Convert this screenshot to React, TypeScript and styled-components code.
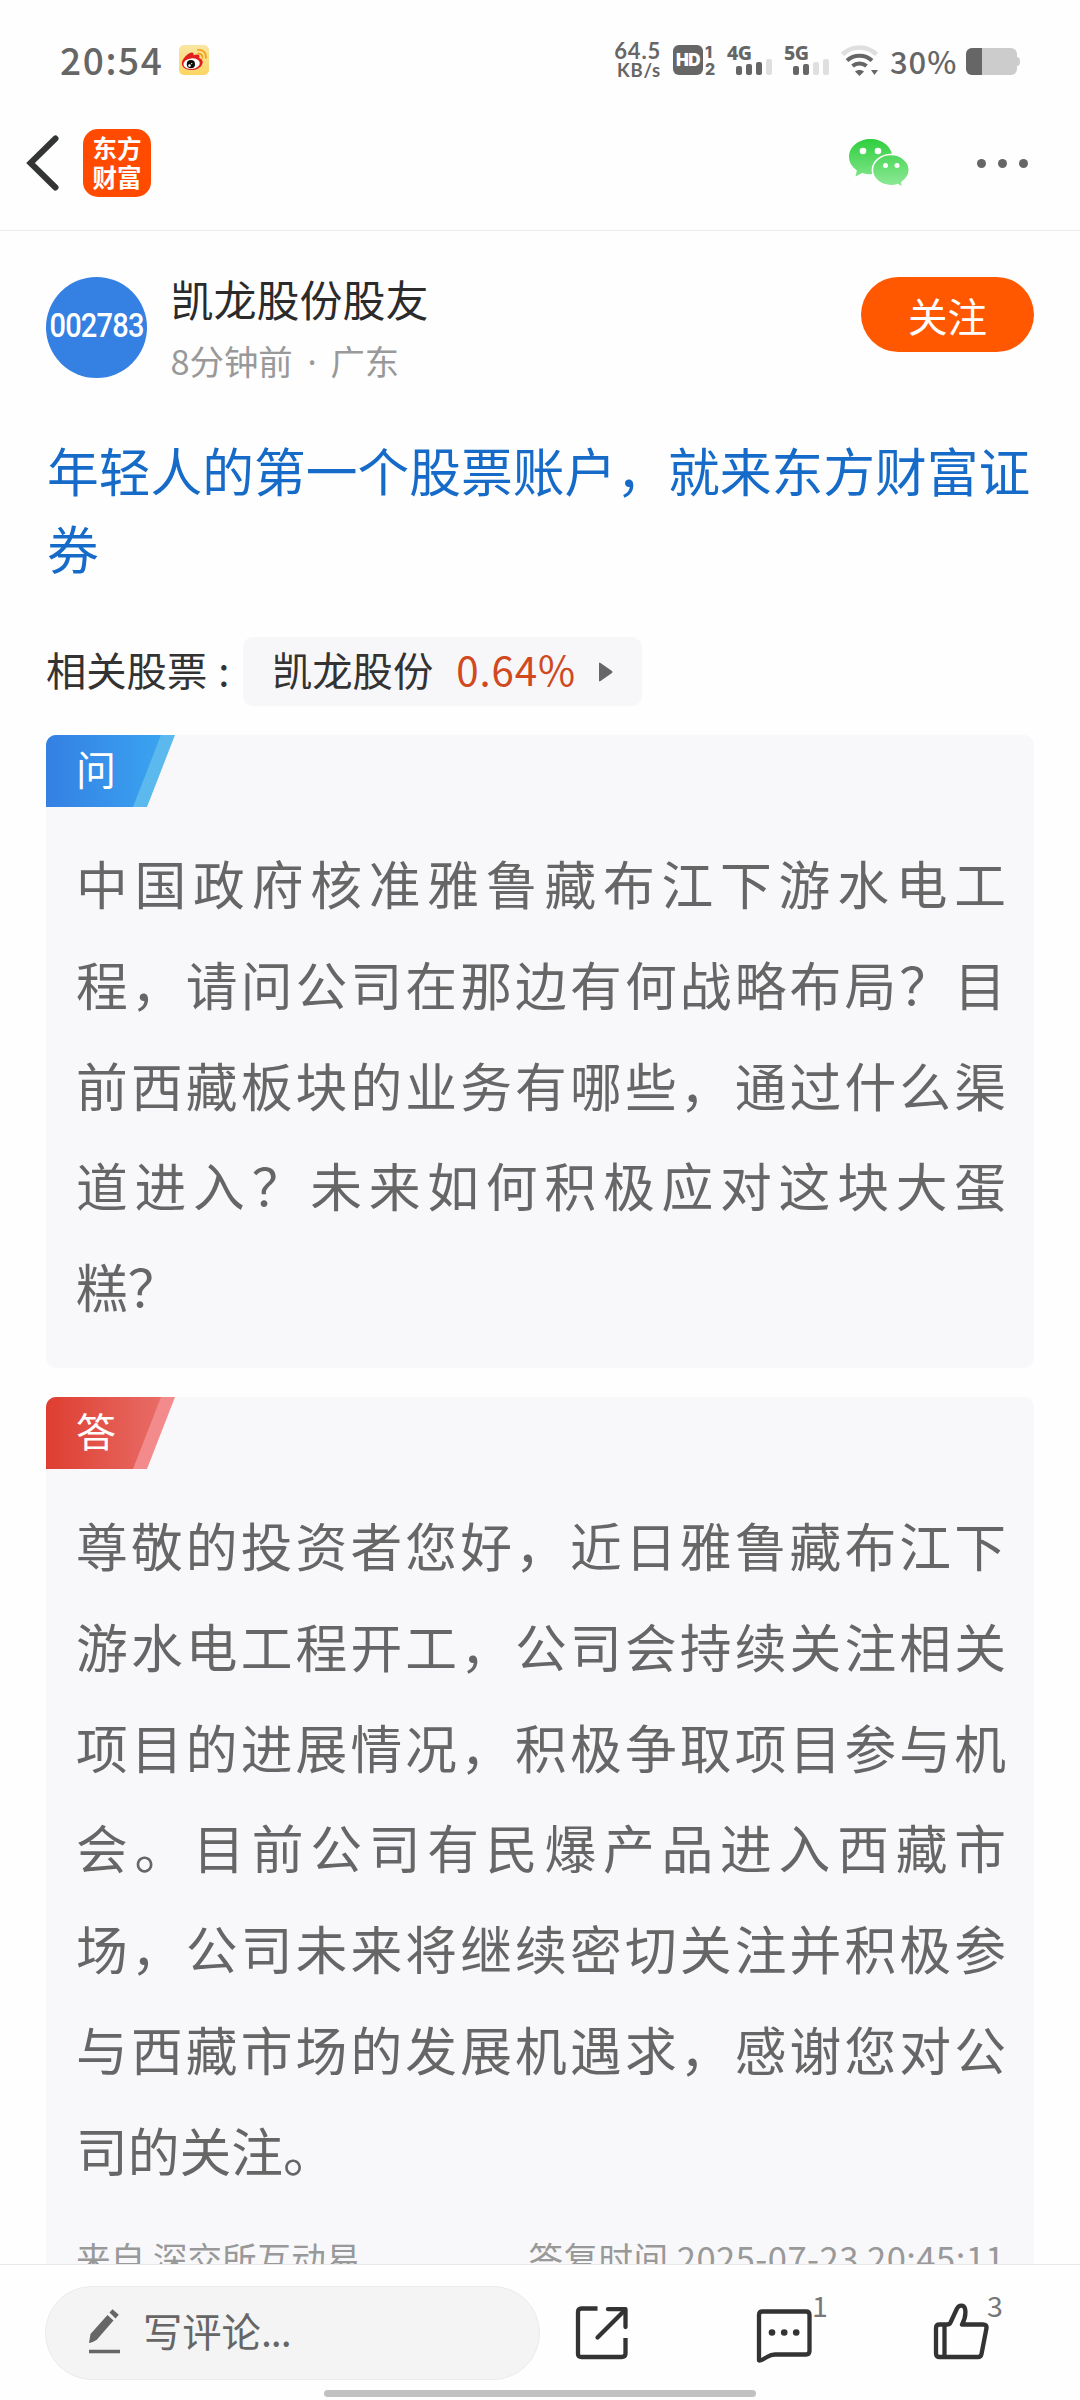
import React from 'react';
import styled, { createGlobalStyle } from 'styled-components';

const GlobalStyle = createGlobalStyle`
  * { box-sizing: border-box; }
  body {
    margin: 0;
    background: #fefefe;
    font-family: "Noto Sans CJK SC", "Noto Sans", sans-serif;
    text-spacing-trim: space-all;
  }
`;

const Screen = styled.div`
  width: 1080px;
  height: 2400px;
  display: flex;
  flex-direction: column;
  overflow: hidden;
  background: #fefefe;
`;

const StatusBar = styled.header`
  height: 96px;
  flex: none;
  display: flex;
  justify-content: space-between;
  padding: 42px 60px 0 60px;
  color: #666;
`;

const StatusGroup = styled.div`
  display: flex;
  align-items: flex-start;
`;

const Clock = styled.span`
  width: 119px;
  font-size: 37px;
  line-height: 34px;
  font-weight: 500;
  letter-spacing: 1.6px;
`;

const AppBadge = styled.svg`
  display: block;
  margin-top: 3px;
`;

const NetSpeed = styled.div`
  display: flex;
  flex-direction: column;
  align-items: flex-end;
  width: 48px;
  margin-right: 12px;
  font: 700 22px/18px Lato, sans-serif;
  letter-spacing: 0.8px;
`;

const NetUnit = styled.span`
  font-size: 18.5px;
  line-height: 20px;
`;

const HdBadge = styled.div`
  width: 30px;
  height: 30px;
  margin-top: 3px;
  border-radius: 6px;
  background: #666;
  color: #fff;
  display: flex;
  align-items: center;
  justify-content: center;
  font: 900 17px/30px Inter, sans-serif;
  letter-spacing: -0.5px;
`;

const SimNumbers = styled.div`
  display: flex;
  flex-direction: column;
  width: 24px;
  padding: 2px 0 0 2px;
  font: 800 16px/17px Inter, sans-serif;
`;

const SimSignal = styled.div`
  display: flex;
  flex-direction: column;
  width: 57px;
  padding-top: 3px;
`;

const SimLabel = styled.span`
  height: 14px;
  font: 800 19.5px/15px "Noto Sans", sans-serif;
  letter-spacing: -0.4px;
`;

const Bars = styled.div`
  display: flex;
  align-items: flex-end;
  gap: 4px;
  height: 16px;
  padding-left: 9px;
`;

const Bar = styled.i<{ $h: number; $on: boolean }>`
  width: 6px;
  height: ${(p) => p.$h}px;
  border-radius: 2px;
  background: ${(p) => (p.$on ? '#666' : '#dfdfdf')};
`;

const WifiIcon = styled.svg`
  display: block;
  margin: 3px 12px 0 0;
`;

const BatteryText = styled.span`
  width: 76px;
  font-size: 31px;
  line-height: 38px;
  font-weight: 500;
  letter-spacing: 0.9px;
`;

const BatteryIcon = styled.svg`
  display: block;
  margin-top: 6px;
`;

const NavBar = styled.nav`
  height: 135px;
  flex: none;
  display: flex;
  align-items: center;
  padding: 0 52px 0 26px;
  border-bottom: 1px solid #ececec;
`;

const AppLogo = styled.div`
  width: 68px;
  height: 68px;
  margin-left: 24px;
  border-radius: 15px;
  background: #ff4a00;
  color: #fff;
  display: flex;
  flex-direction: column;
  align-items: center;
  justify-content: center;
  font-size: 24.5px;
  font-weight: 700;
  line-height: 29px;
  padding-bottom: 2px;
`;

const NavSpacer = styled.div`
  flex: 1;
`;

const MoreDots = styled.div`
  display: flex;
  gap: 12px;
  margin-left: 67px;
`;

const Dot = styled.i`
  width: 9px;
  height: 9px;
  border-radius: 50%;
  background: #666;
`;

const Content = styled.main`
  flex: 1;
  min-height: 0;
  overflow: hidden;
  padding: 46px 46px 0;
`;

const Author = styled.section`
  display: flex;
  height: 101px;
`;

const Avatar = styled.div`
  width: 101px;
  height: 101px;
  border-radius: 50%;
  background: #3480e3;
  color: #fff;
  display: flex;
  align-items: center;
  justify-content: center;
  padding-bottom: 3px;
`;

const StockCode = styled.span`
  font: 500 33px/96px Roboto, sans-serif;
  letter-spacing: -0.9px;
  transform: scaleX(0.88);
`;

const AuthorInfo = styled.div`
  flex: 1;
  padding-left: 23.5px;
`;

const AuthorName = styled.div`
  font-size: 43px;
  line-height: 42px;
  font-weight: 400;
  color: #2b2b2b;
`;

const AuthorMeta = styled.div`
  margin-top: 20px;
  font-size: 34.4px;
  line-height: 42px;
  font-weight: 400;
  color: #999;
`;

const MetaDot = styled.span`
  font-family: "Noto Sans", sans-serif;
  margin: 0 6px 0 7px;
`;

const FollowButton = styled.button`
  width: 173px;
  height: 75px;
  border: 0;
  border-radius: 38px;
  background: #ff5800;
  color: #fff;
  font-family: inherit;
  font-size: 39.5px;
  line-height: 75px;
  padding: 0 0 7px;
`;

const Title = styled.h1`
  margin: 53px 0 0 1px;
  width: 992px;
  font-size: 51.75px;
  line-height: 78px;
  font-weight: 400;
  color: #166bc9;
`;

const Related = styled.section`
  display: flex;
  align-items: center;
  height: 69px;
  margin-top: 50px;
  font-size: 40.3px;
  line-height: 60px;
  font-weight: 400;
  color: #333;
`;

const RelatedText = styled.span`
  padding-bottom: 6px;
`;

const RelatedLabel = styled(RelatedText)`
  width: 197px;
  word-spacing: 2px;
`;

const StockChip = styled.div`
  display: flex;
  align-items: center;
  height: 69px;
  width: 399px;
  padding-left: 29px;
  border-radius: 10px;
  background: #f7f7f9;
`;

const StockChange = styled(RelatedText)`
  width: 119px;
  margin: 0 24px 0 23px;
  letter-spacing: 0.9px;
  color: #d0491f;
`;

const Card = styled.article<{ $tall?: boolean }>`
  margin-top: 29px;
  height: ${(p) => (p.$tall ? 'auto' : '633px')};
  border-radius: 10px;
  background: #f8f8fa;
  overflow: hidden;
`;

const Tag = styled.div<{ $tone: 'ask' | 'answer' }>`
  width: 129px;
  height: 72px;
  clip-path: polygon(0 0, 100% 0, 101px 100%, 0 100%);
  background: ${(p) => (p.$tone === 'ask' ? '#5bb9ee' : '#f38a8c')};
`;

const TagFace = styled.div<{ $tone: 'ask' | 'answer' }>`
  width: 115px;
  height: 72px;
  padding-left: 30px;
  clip-path: polygon(0 0, 100% 0, 87px 100%, 0 100%);
  background: ${(p) =>
    p.$tone === 'ask'
      ? 'linear-gradient(90deg, #3480e3, #3aa3f0)'
      : 'linear-gradient(90deg, #de3e30, #e86c66)'};
  color: #fff;
  font-size: 40px;
  line-height: 66px;
`;

const Body = styled.p`
  margin: 26px 0 0;
  padding: 0 28px 0 30px;
  font-size: 51.75px;
  line-height: 100.8px;
  font-weight: 400;
  color: #666;
  text-align: justify;
`;

const Source = styled.footer`
  display: flex;
  justify-content: space-between;
  margin-top: 26px;
  padding: 0 29px 40px 30px;
  font-size: 34.6px;
  line-height: 60px;
  font-weight: 400;
  color: #999;
`;

const Timestamp = styled.span`
  letter-spacing: 0.45px;
`;

const BottomBar = styled.footer`
  height: 136px;
  flex: none;
  border-top: 1px solid #e9e9e9;
  background: #fefefe;
  display: flex;
  flex-direction: column;
`;

const Actions = styled.div`
  display: flex;
  align-items: flex-start;
  padding: 21px 0 0 45px;
  height: 125px;
`;

const CommentBox = styled.div`
  width: 495px;
  height: 94px;
  border: 1px solid #ebebeb;
  border-radius: 47px;
  background: #f4f4f4;
  display: flex;
  align-items: center;
  padding: 0 0 4px 42px;
  color: #666;
  font-size: 39.3px;
`;

const Placeholder = styled.span`
  margin-left: 22px;
  padding-bottom: 3px;
`;

const Ellipsis = styled.span`
  letter-spacing: -1px;
`;

const ActionIcon = styled.svg<{ $gap: number }>`
  display: block;
  flex: none;
  margin: 15px 0 0 ${(p) => p.$gap}px;
`;

const Count = styled.span`
  width: 16px;
  margin: 7px 2px 0 -2px;
  font: 400 28.5px/24px "Noto Sans CJK SC", sans-serif;
  color: #777;
`;

const HomeIndicator = styled.div`
  width: 432px;
  height: 7px;
  border-radius: 4px;
  margin: 0 auto;
  background: #c1c1c1;
`;

function Signal({ label, level }: { label: string; level: number }) {
  return (
    <SimSignal>
      <SimLabel>{label}</SimLabel>
      <Bars>
        {[9, 11, 13, 16].map((h, i) => (
          <Bar key={h} $h={h} $on={i < level} />
        ))}
      </Bars>
    </SimSignal>
  );
}

function Weibo() {
  return (
    <AppBadge width="30" height="30" viewBox="0 0 30 30">
      <defs>
        <linearGradient id="wb" x1="0" y1="0" x2="0" y2="1">
          <stop offset="0" stopColor="#f9e6a4" />
          <stop offset="1" stopColor="#fcd562" />
        </linearGradient>
      </defs>
      <rect width="30" height="30" rx="5" fill="url(#wb)" />
      <path d="M12.6 7.5c1.6-.3 2.3.9 2 2.7 1.8-.8 4.8-1.4 5.6.2.4.8.2 1.7-.1 2.6 2.2.7 3.7 2 3.6 4.2-.2 4.4-5.3 7.8-11 7.8C7 25 2.800 22.300 2.800 18.500c0-4.200 6-10.500 9.800-11z" fill="#e0201c" />
      <ellipse cx="12.600" cy="18.700" rx="8.200" ry="5.300" fill="#fff" transform="rotate(-6 12.600 18.700)" />
      <circle cx="11.900" cy="19.200" r="4.100" fill="#0c0c0c" />
      <circle cx="10.500" cy="20.600" r="1.300" fill="#fff" />
      <circle cx="12.700" cy="18.600" r=".7" fill="#fff" />
      <path d="M19.200 8.600c2.900-.4 4.700 1.500 4.200 4.200M18.800 5c5.200-.7 8.900 2.900 8 8" fill="none" stroke="#f3a01c" strokeWidth="1.700" strokeLinecap="round" />
    </AppBadge>
  );
}

function WeChat() {
  return (
    <svg width="62" height="50" viewBox="0 0 62 50">
      <defs>
        <linearGradient id="wc" gradientUnits="userSpaceOnUse" x1="0" y1="0" x2="0" y2="48">
          <stop offset="0" stopColor="#2dce3c" />
          <stop offset="1" stopColor="#8ee997" />
        </linearGradient>
      </defs>
      <path d="M22.500 1C10.600 1 1 8.900 1 18.800c0 5.600 3.100 10.400 7.900 13.600L7.500 38.500l6.700-3.500c2.600.8 5.400 1.200 8.300 1.200 12 0 21.700-7.800 21.700-17.400S34.500 1 22.500 1z" fill="url(#wc)" />
      <path d="M43 16.500c-10.300 0-18.600 7-18.600 15.600S32.700 47.700 43 47.700c2.300 0 4.500-.3 6.500-1l5.500 2.800-1.200-5.100c4.500-2.900 7.500-7.300 7.500-12.300 0-8.600-8.200-15.600-18.300-15.600z" fill="url(#wc)" stroke="#fefefe" strokeWidth="1.600" />
      <g fill="#fff">
        <circle cx="15" cy="13" r="3.300" />
        <circle cx="30" cy="13" r="3.300" />
        <circle cx="37.500" cy="27.500" r="2.500" />
        <circle cx="49" cy="27.500" r="2.500" />
      </g>
    </svg>
  );
}

export default function App() {
  return (
    <Screen>
      <GlobalStyle />
      <StatusBar>
        <StatusGroup>
          <Clock>20:54</Clock>
          <Weibo />
        </StatusGroup>
        <StatusGroup>
          <NetSpeed>
            <span>64.5</span>
            <NetUnit>KB/s</NetUnit>
          </NetSpeed>
          <HdBadge>HD</HdBadge>
          <SimNumbers>
            <span>1</span>
            <span>2</span>
          </SimNumbers>
          <Signal label="4G" level={3} />
          <Signal label="5G" level={2} />
          <WifiIcon width="37" height="31" viewBox="0 0 37 31">
            <path d="M1.500 9.500C10.500 0 26.500 0 35.500 9.500" fill="none" stroke="#dfdfdf" strokeWidth="4.500" />
            <path d="M6 15.500c7-6.500 18-6.500 25 0M11.500 21c4-3.500 10-3.500 14 0" fill="none" stroke="#666" strokeWidth="4" />
            <path d="M14 26.500c2.600-2 6.400-2 9 0L18.500 31z" fill="#666" />
            <path d="M30 25h7l-3.500 5z" fill="#666" />
          </WifiIcon>
          <BatteryText>30%</BatteryText>
          <BatteryIcon width="54" height="27" viewBox="0 0 54 27">
            <rect width="51" height="27" rx="6" fill="#ccc" />
            <path d="M51 9c2 0 3 1.500 3 4.500S53 18 51 18z" fill="#ccc" />
            <path d="M6 0h10v27H6a6 6 0 0 1-6-6V6a6 6 0 0 1 6-6z" fill="#666" />
          </BatteryIcon>
        </StatusGroup>
      </StatusBar>

      <NavBar>
        <svg width="33" height="58" viewBox="0 0 33 58">
          <path d="M29.500 4.500L4.500 29l25 24.500" fill="none" stroke="#333535" strokeWidth="6" strokeLinecap="round" strokeLinejoin="miter" />
        </svg>
        <AppLogo>
          <span>东方</span>
          <span>财富</span>
        </AppLogo>
        <NavSpacer />
        <WeChat />
        <MoreDots>
          <Dot />
          <Dot />
          <Dot />
        </MoreDots>
      </NavBar>

      <Content>
        <Author>
          <Avatar>
            <StockCode>002783</StockCode>
          </Avatar>
          <AuthorInfo>
            <AuthorName>凯龙股份股友</AuthorName>
            <AuthorMeta>
              8分钟前 <MetaDot>·</MetaDot> 广东
            </AuthorMeta>
          </AuthorInfo>
          <FollowButton>关注</FollowButton>
        </Author>

        <Title>年轻人的第一个股票账户，就来东方财富证券</Title>

        <Related>
          <RelatedLabel>相关股票 :</RelatedLabel>
          <StockChip>
            <RelatedText>凯龙股份</RelatedText>
            <StockChange>0.64%</StockChange>
            <svg width="14" height="20" viewBox="0 0 14 20">
              <path d="M0 1.500Q0 0 1.500 1L13 9q1 1 0 2L1.500 19Q0 20 0 18.500z" fill="#666" />
            </svg>
          </StockChip>
        </Related>

        <Card>
          <Tag $tone="ask">
            <TagFace $tone="ask">问</TagFace>
          </Tag>
          <Body>
            中国政府核准雅鲁藏布江下游水电工程，请问公司在那边有何战略布局？目前西藏板块的业务有哪些，通过什么渠道进入？未来如何积极应对这块大蛋糕？
          </Body>
        </Card>

        <Card $tall>
          <Tag $tone="answer">
            <TagFace $tone="answer">答</TagFace>
          </Tag>
          <Body>
            尊敬的投资者您好，近日雅鲁藏布江下游水电工程开工，公司会持续关注相关项目的进展情况，积极争取项目参与机会。目前公司有民爆产品进入西藏市场，公司未来将继续密切关注并积极参与西藏市场的发展机遇求，感谢您对公司的关注。
          </Body>
          <Source>
            <span>来自 深交所互动易</span>
            <Timestamp>答复时间 2025-07-23 20:45:11</Timestamp>
          </Source>
        </Card>
      </Content>

      <BottomBar>
        <Actions>
          <CommentBox>
            <svg width="33" height="46" viewBox="0 0 33 46">
              <path d="M1 35l1.500-9L19.500 7l6 5.500L9 31.500c-2.500 2-5 3-8 3.500z" fill="#666" />
              <path d="M21.500 4.500L24.500 1.200l6.300 5.600-3.300 3.600z" fill="#666" />
              <path d="M1 43.500h31" stroke="#666" strokeWidth="3.500" />
            </svg>
            <Placeholder>
              写评论<Ellipsis>...</Ellipsis>
            </Placeholder>
          </CommentBox>
          <ActionIcon $gap={35} width="54" height="62" viewBox="0 0 54 62">
            <g fill="none" stroke="#333" strokeWidth="4.300">
              <path d="M22.500 7.500H6.500Q3 7.500 3 11v42Q3 56 6.500 56h40Q50.500 56 50.500 52.500V37" />
              <path d="M33 8.200h17.500V26" strokeLinecap="round" strokeLinejoin="round" />
              <path d="M50 9L22.500 36.500" strokeLinecap="round" />
            </g>
          </ActionIcon>
          <ActionIcon $gap={126} width="59" height="62" viewBox="0 0 59 62">
            <path d="M4 59.500V14q0-3.500 3.500-3.500H51q3.500 0 3.500 3.500v36q0 3.500-3.500 3.500H20q-4 0-8 2.500C8.500 58 6 60 4 59.500z" fill="none" stroke="#333" strokeWidth="4.300" strokeLinejoin="round" />
            <circle cx="17" cy="31.500" r="3.300" fill="#333" />
            <circle cx="29.200" cy="31.500" r="3.300" fill="#333" />
            <circle cx="41.200" cy="31.500" r="3.300" fill="#333" />
          </ActionIcon>
          <Count>1</Count>
          <ActionIcon $gap={103} width="56" height="62" viewBox="0 0 56 62">
            <g fill="none" stroke="#333" strokeWidth="4.300" strokeLinejoin="round">
              <path d="M3 27q0-3.500 3.500-3.500H14q2.500 0 3.500-2L24 7.500c2.500-4.500 7.500-3.500 8.200 1 .8 5.500-.7 10.500-3.200 15H50q4 0 3.500 3.500L48.500 53q-.6 3-3.500 3H6.500Q3 56 3 52.500z" />
              <path d="M11.500 24v32" />
            </g>
          </ActionIcon>
          <Count>3</Count>
        </Actions>
        <HomeIndicator />
      </BottomBar>
    </Screen>
  );
}
